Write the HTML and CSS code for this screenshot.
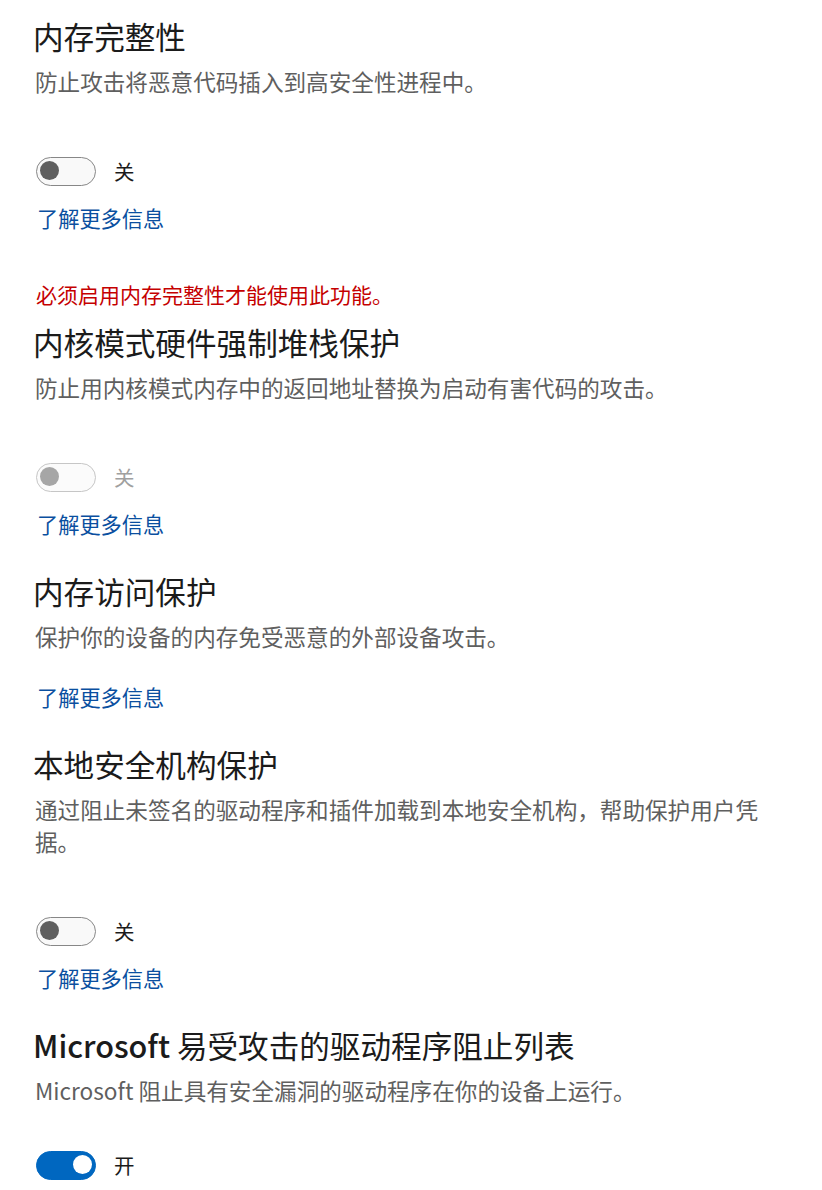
FILE: index.html
```html
<!DOCTYPE html>
<html lang="zh-CN">
<head>
<meta charset="utf-8">
<title>内核隔离</title>
<link rel="stylesheet" href="styles.css">
</head>
<body>
<main class="page">
  <section class="section">
    <h2 class="title">内存完整性</h2>
    <p class="desc">防止攻击将恶意代码插入到高安全性进程中。</p>
    <div class="switch-row">
      <span class="switch"><span class="knob"></span></span>
      <span class="switch-label">关</span>
    </div>
    <a class="link" href="#">了解更多信息</a>
  </section>

  <section class="section section--noted">
    <p class="note">必须启用内存完整性才能使用此功能。</p>
    <h2 class="title">内核模式硬件强制堆栈保护</h2>
    <p class="desc">防止用内核模式内存中的返回地址替换为启动有害代码的攻击。</p>
    <div class="switch-row switch-row--disabled">
      <span class="switch"><span class="knob"></span></span>
      <span class="switch-label">关</span>
    </div>
    <a class="link" href="#">了解更多信息</a>
  </section>

  <section class="section">
    <h2 class="title">内存访问保护</h2>
    <p class="desc">保护你的设备的内存免受恶意的外部设备攻击。</p>
    <a class="link" href="#">了解更多信息</a>
  </section>

  <section class="section">
    <h2 class="title">本地安全机构保护</h2>
    <p class="desc">通过阻止未签名的驱动程序和插件加载到本地安全机构，帮助保护用户凭据。</p>
    <div class="switch-row">
      <span class="switch"><span class="knob"></span></span>
      <span class="switch-label">关</span>
    </div>
    <a class="link" href="#">了解更多信息</a>
  </section>

  <section class="section">
    <h2 class="title"><span class="latin-strong">Microsoft</span> 易受攻击的驱动程序阻止列表</h2>
    <p class="desc">Microsoft 阻止具有安全漏洞的驱动程序在你的设备上运行。</p>
    <div class="switch-row switch-row--tight switch-row--on">
      <span class="switch"><span class="knob"></span></span>
      <span class="switch-label">开</span>
    </div>
  </section>
</main>
</body>
</html>
```

FILE: styles.css
```css
html, body {
  margin: 0;
  padding: 0;
  background: #ffffff;
}

body {
  font-family: "Noto Sans CJK SC", "Noto Sans", sans-serif;
  color: #1b1b1b;
}

.page {
  padding: 16px 0 0 33px;
  width: 736px;
}

.section {
  display: flex;
  flex-direction: column;
  align-items: flex-start;
}

.section + .section {
  margin-top: 33px;
}

.section.section--noted {
  margin-top: 48px;
}

.title {
  margin: 0;
  font-size: 30.6px;
  line-height: 40px;
  font-weight: 400;
  color: #1b1b1b;
}

.note + .title {
  margin-top: 14px;
}

.latin-strong {
  font-weight: 500;
}

.desc {
  margin: 10px 0 0 2px;
  font-size: 22.6px;
  line-height: 32px;
  color: #5f5f5f;
}

.note {
  margin: 0 0 0 3px;
  font-size: 21px;
  line-height: 28px;
  color: #c50000;
}

.switch-row {
  margin-top: 58px;
  height: 30px;
  display: flex;
  align-items: center;
  gap: 18px;
  padding-left: 3px;
}

.switch-row--tight {
  margin-top: 43px;
}

.switch {
  position: relative;
  box-sizing: border-box;
  width: 60px;
  height: 29px;
  border: 1.5px solid #878787;
  border-radius: 15px;
  background: #f9f9f9;
}

.knob {
  position: absolute;
  top: 3.5px;
  left: 3px;
  width: 19px;
  height: 19px;
  border-radius: 50%;
  background: #5f5f5f;
}

.switch-label {
  font-size: 20.5px;
  line-height: 28px;
  color: #1b1b1b;
}

.switch-row--disabled .switch {
  border-color: #c6c6c6;
  background: #fbfbfb;
}

.switch-row--disabled .knob {
  background: #a6a6a6;
}

.switch-row--disabled .switch-label {
  color: #a0a0a0;
}

.switch-row--on .switch {
  border-color: #0067c0;
  background: #0067c0;
}

.switch-row--on .knob {
  left: auto;
  right: 3px;
  background: #ffffff;
}

.link {
  margin: 18px 0 0 4px;
  font-size: 21.2px;
  line-height: 28px;
  color: #0a4fa0;
  text-decoration: none;
}

.desc + .link {
  margin-top: 30px;
}
```
